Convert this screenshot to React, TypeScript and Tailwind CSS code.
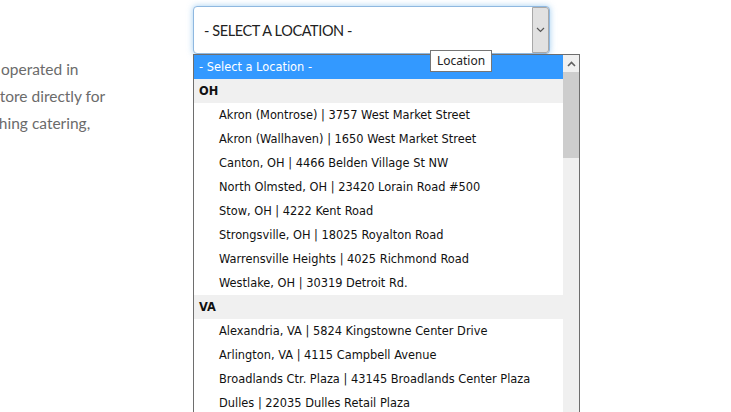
import React from "react";

const OH = [
  "Akron (Montrose) | 3757 West Market Street",
  "Akron (Wallhaven) | 1650 West Market Street",
  "Canton, OH | 4466 Belden Village St NW",
  "North Olmsted, OH | 23420 Lorain Road #500",
  "Stow, OH | 4222 Kent Road",
  "Strongsville, OH | 18025 Royalton Road",
  "Warrensville Heights | 4025 Richmond Road",
  "Westlake, OH | 30319 Detroit Rd.",
];
const VA = [
  "Alexandria, VA | 5824 Kingstowne Center Drive",
  "Arlington, VA | 4115 Campbell Avenue",
  "Broadlands Ctr. Plaza | 43145 Broadlands Center Plaza",
  "Dulles | 22035 Dulles Retail Plaza",
];

const listFont = { fontFamily: "Tahoma, 'DejaVu Sans', sans-serif" };

export default function App() {
  return (
    <div className="w-[731px] h-[412px] bg-white overflow-hidden flex">
      <div
        className="w-[193px] shrink-0 overflow-hidden pt-[56px] text-[15.5px] leading-[27px] text-[#6b6b6b]"
        style={{ fontFamily: "Lato, 'Open Sans', sans-serif" }}
      >
        <div className="whitespace-nowrap ml-[1px]">operated in</div>
        <div className="whitespace-nowrap -ml-[7px]">store directly for</div>
        <div className="whitespace-nowrap -ml-[24px]">nothing catering,</div>
      </div>
      <div className="relative w-[357px] shrink-0 pt-[6px]">
        <div className="h-[48px] flex items-stretch rounded-[4px] border border-[#8fb8e0] bg-white shadow-[0_0_6px_rgba(102,175,233,0.6)]">
          <div
            className="flex-1 flex items-center pl-[10px] pt-[2px] text-[14.5px] text-[#222] tracking-[-0.4px]"
            style={{ fontFamily: "Lato, 'Open Sans', sans-serif" }}
          >
            - SELECT A LOCATION -
          </div>
          <div className="w-[17px] flex items-center justify-center bg-[#e1e1e1] border border-[#a8a8a8] rounded-r-[3px]">
            <svg width="9" height="6" viewBox="0 0 9 6">
              <path d="M1 1 L4.5 4.5 L8 1" fill="none" stroke="#555" strokeWidth="1.2" />
            </svg>
          </div>
        </div>

        <div
          className="absolute left-0 top-[54px] w-[387px] h-[380px] border border-[#6e6e6e] bg-white flex text-[11.4px] text-[#111]"
          style={listFont}
        >
          <div className="flex-1 flex flex-col">
            <div className="h-[24px] flex items-center pt-[1px] pl-[5px] bg-[#3399ff] text-white">- Select a Location -</div>
            <div className="h-[24px] flex items-center pt-[1px] pl-[5px] bg-[#f0f0f0] font-bold">OH</div>
            {OH.map((t) => (
              <div key={t} className="h-[24px] flex items-center pt-[1px] pl-[25px]">{t}</div>
            ))}
            <div className="h-[24px] flex items-center pt-[1px] pl-[5px] bg-[#f0f0f0] font-bold">VA</div>
            {VA.map((t) => (
              <div key={t} className="h-[24px] flex items-center pt-[1px] pl-[25px]">{t}</div>
            ))}
          </div>
          <div className="w-[16px] bg-[#f0f0f0] flex flex-col">
            <div className="h-[17px] flex items-center justify-center">
              <svg width="9" height="6" viewBox="0 0 9 6">
                <path d="M1 5 L4.5 1.5 L8 5" fill="none" stroke="#606060" strokeWidth="1.6" />
              </svg>
            </div>
            <div className="h-[86px] bg-[#cdcdcd]" />
          </div>
        </div>

        <div
          className="absolute left-[237px] top-[50px] h-[22px] px-[6px] flex items-center border border-[#767676] bg-white text-[12px] text-[#222]"
          style={{ fontFamily: "'Noto Sans', 'Open Sans', sans-serif" }}
        >
          Location
        </div>
      </div>
    </div>
  );
}
